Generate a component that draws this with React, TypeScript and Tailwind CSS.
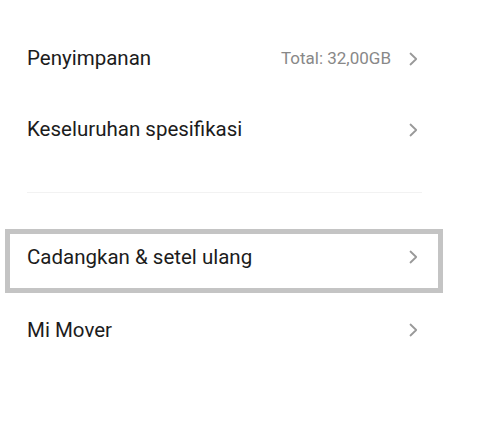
import React from 'react';

function Chevron() {
  return (
    <svg width="9" height="14" viewBox="0 0 9 14" fill="none" className="shrink-0">
      <path d="M1.5 1.5 L7.2 7 L1.5 12.5" stroke="#999999" strokeWidth="1.8" strokeLinecap="round" strokeLinejoin="round" />
    </svg>
  );
}

function Row({ label, value }: { label: string; value?: string }) {
  return (
    <div className="flex h-[71px] items-center pl-[27px] pr-[64px]">
      <span className="text-[20.5px] text-[#1c1c1c]">{label}</span>
      <div className="ml-auto flex items-center gap-[18px]">
        {value && <span className="text-[17px] text-[#888888]">{value}</span>}
        <Chevron />
      </div>
    </div>
  );
}

export default function App() {
  return (
    <div className="h-[440px] w-[482px] bg-white pt-[23px]" style={{ fontFamily: 'Roboto, "Liberation Sans", sans-serif' }}>
      <Row label="Penyimpanan" value="Total: 32,00GB" />
      <Row label="Keseluruhan spesifikasi" />
      <div className="ml-[27px] mr-[60px] mt-[27px] h-px bg-[#f2f2f2]" />
      <div className="ml-[5px] mt-[36px] flex h-[64px] w-[438px] items-center border-[5px] border-[#c4c4c4] pb-[8px] pl-[17px] pr-[20px]">
        <span className="text-[20.5px] text-[#1c1c1c]">Cadangkan &amp; setel ulang</span>
        <div className="ml-auto">
          <Chevron />
        </div>
      </div>
      <div className="flex h-[74px] items-center pl-[27px] pr-[64px]">
        <span className="text-[20.5px] text-[#1c1c1c]">Mi Mover</span>
        <div className="ml-auto">
          <Chevron />
        </div>
      </div>
    </div>
  );
}
